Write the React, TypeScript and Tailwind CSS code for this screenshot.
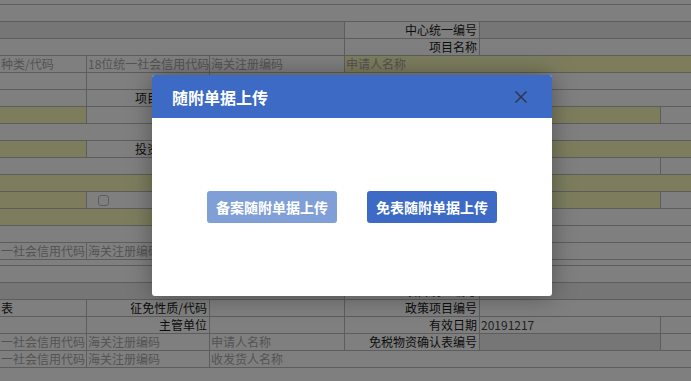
import React from "react";

// one table cell: width in px, optional text, tone and border on the right
type Cell = {
  w: number;
  text?: string;
  align?: "left" | "right";
  bg?: "yellow" | "dark";
  tone?: "label" | "ph" | "value";
  b?: boolean;
  check?: boolean;
};

type Row = { h?: number; cells: Cell[] };

const rows: Row[] = [
  { cells: [{ w: 691 }] },
  { cells: [{ w: 345, bg: "dark", b: true }, { w: 135, text: "中心统一编号", align: "right", tone: "label", b: true }, { w: 211, bg: "dark" }] },
  { cells: [{ w: 345, b: true }, { w: 135, text: "项目名称", align: "right", tone: "label", b: true }, { w: 211 }] },
  {
    cells: [
      { w: 87, text: "种类/代码", tone: "ph", b: true },
      { w: 123, text: "18位统一社会信用代码", tone: "ph", b: true },
      { w: 135, text: "海关注册编码", tone: "ph", b: true },
      { w: 346, text: "申请人名称", tone: "ph", bg: "yellow" },
    ],
  },
  { cells: [{ w: 87, b: true }, { w: 123, b: true }, { w: 481 }] },
  { cells: [{ w: 87, b: true }, { w: 123, text: "项目类型代码", align: "right", tone: "label", b: true }, { w: 481 }] },
  { cells: [{ w: 87, bg: "yellow", b: true }, { w: 123, b: true }, { w: 135 }, { w: 135, b: true }, { w: 181, bg: "yellow", b: true }, { w: 30 }] },
  { cells: [{ w: 691 }] },
  { cells: [{ w: 87, bg: "yellow", b: true }, { w: 123, text: "投资总额币制", align: "right", tone: "label", b: true }, { w: 135, b: true }, { w: 135, b: true }, { w: 211, bg: "yellow" }] },
  { cells: [{ w: 661, b: true }, { w: 30 }] },
  { cells: [{ w: 691, bg: "yellow" }] },
  { cells: [{ w: 87, bg: "yellow", b: true }, { w: 258, check: true, b: true }, { w: 135, b: true }, { w: 181, bg: "yellow", b: true }, { w: 30 }] },
  { cells: [{ w: 345, bg: "yellow" }, { w: 346 }] },
  { cells: [{ w: 691 }] },
  { cells: [{ w: 87, text: "一社会信用代码", tone: "ph", b: true }, { w: 123, text: "海关注册编码", tone: "ph", b: true }, { w: 481 }] },
  { h: 6, cells: [{ w: 691 }] },
  { cells: [{ w: 691 }] },
  { cells: [{ w: 345, bg: "dark", b: true }, { w: 135, text: "项目统一编号", align: "right", tone: "label", b: true }, { w: 211, bg: "dark" }] },
  {
    cells: [
      { w: 87, text: "表", tone: "label", b: true },
      { w: 123, text: "征免性质/代码", align: "right", tone: "label", b: true },
      { w: 135, b: true },
      { w: 135, text: "政策项目编号", align: "right", tone: "label", b: true },
      { w: 211 },
    ],
  },
  {
    cells: [
      { w: 87, b: true },
      { w: 123, text: "主管单位", align: "right", tone: "label", b: true },
      { w: 135, b: true },
      { w: 135, text: "有效日期", align: "right", tone: "label", b: true },
      { w: 181, text: "20191217", tone: "value", b: true },
      { w: 30 },
    ],
  },
  {
    cells: [
      { w: 87, text: "一社会信用代码", tone: "ph", b: true },
      { w: 123, text: "海关注册编码", tone: "ph", b: true },
      { w: 135, text: "申请人名称", tone: "ph", b: true },
      { w: 135, text: "免税物资确认表编号", align: "right", tone: "label", b: true },
      { w: 181, bg: "dark", b: true },
      { w: 30 },
    ],
  },
  {
    cells: [
      { w: 87, text: "一社会信用代码", tone: "ph", b: true },
      { w: 123, text: "海关注册编码", tone: "ph", b: true },
      { w: 135, text: "收发货人名称", tone: "ph" },
      { w: 346 },
    ],
  },
];

function TableCell({ cell }: { cell: Cell }) {
  const bg =
    cell.bg === "yellow" ? "bg-[#fafabc]" : cell.bg === "dark" ? "bg-[#ececec]" : "bg-white";
  const color =
    cell.tone === "ph" ? "text-[#a8a8a8]" : cell.tone === "value" ? "text-[#444]" : "text-[#1a1a1a]";
  return (
    <div
      style={{ width: cell.w }}
      className={`flex h-full shrink-0 items-center overflow-hidden whitespace-nowrap ${bg} ${color} ${
        cell.align === "right" ? "justify-end pr-[2px]" : "justify-start pl-[1px]"
      } ${cell.b ? "border-r border-[#bababa]" : ""}`}
    >
      {cell.check && <span className="ml-[10px] block h-[11px] w-[11px] rounded-[3px] border border-[#bbb] bg-white" />}
      {cell.text}
    </div>
  );
}

function CloseIcon() {
  return (
    <svg width="14" height="14" viewBox="0 0 14 14" fill="none">
      <path d="M1.5 1.5L12.5 12.5M12.5 1.5L1.5 12.5" stroke="#2f3440" strokeWidth="1.4" />
    </svg>
  );
}

export default function App() {
  return (
    <div className="relative h-[381px] w-[691px] overflow-hidden bg-white font-['Noto_Sans_CJK_SC','Noto_Sans',sans-serif] text-[12px] leading-[16px]">
      {/* background form table */}
      <div className="flex flex-col">
        <div className="h-[4px] bg-white" />
        {rows.map((row, i) => (
          <div
            key={i}
            style={{ height: row.h ?? 17 }}
            className="flex shrink-0 border-t border-[#bababa]"
          >
            {row.cells.map((c, j) => (
              <TableCell key={j} cell={c} />
            ))}
          </div>
        ))}
        <div className="h-[14px] border-t border-[#bababa] bg-white" />
      </div>

      {/* dim layer */}
      <div className="absolute inset-0 bg-black/50" />

      {/* upload dialog */}
      <div className="absolute left-[152px] top-[75px] flex h-[221px] w-[400px] flex-col overflow-hidden rounded-[3px] bg-white shadow-[0_0_24px_rgba(0,0,0,0.35)]">
        <div className="flex h-[43px] shrink-0 items-center justify-between bg-[#3c6ac4] pl-[20px] pr-[24px]">
          <span className="text-[16px] font-bold text-white">随附单据上传</span>
          <CloseIcon />
        </div>
        <div className="flex flex-1 items-center justify-center gap-[30px]">
          <button className="h-[32px] w-[130px] rounded-[3px] bg-[#809fd6] text-[14px] font-bold text-white">
            备案随附单据上传
          </button>
          <button className="h-[32px] w-[130px] rounded-[3px] bg-[#3c6ac4] text-[14px] font-bold text-white">
            免表随附单据上传
          </button>
        </div>
      </div>
    </div>
  );
}
